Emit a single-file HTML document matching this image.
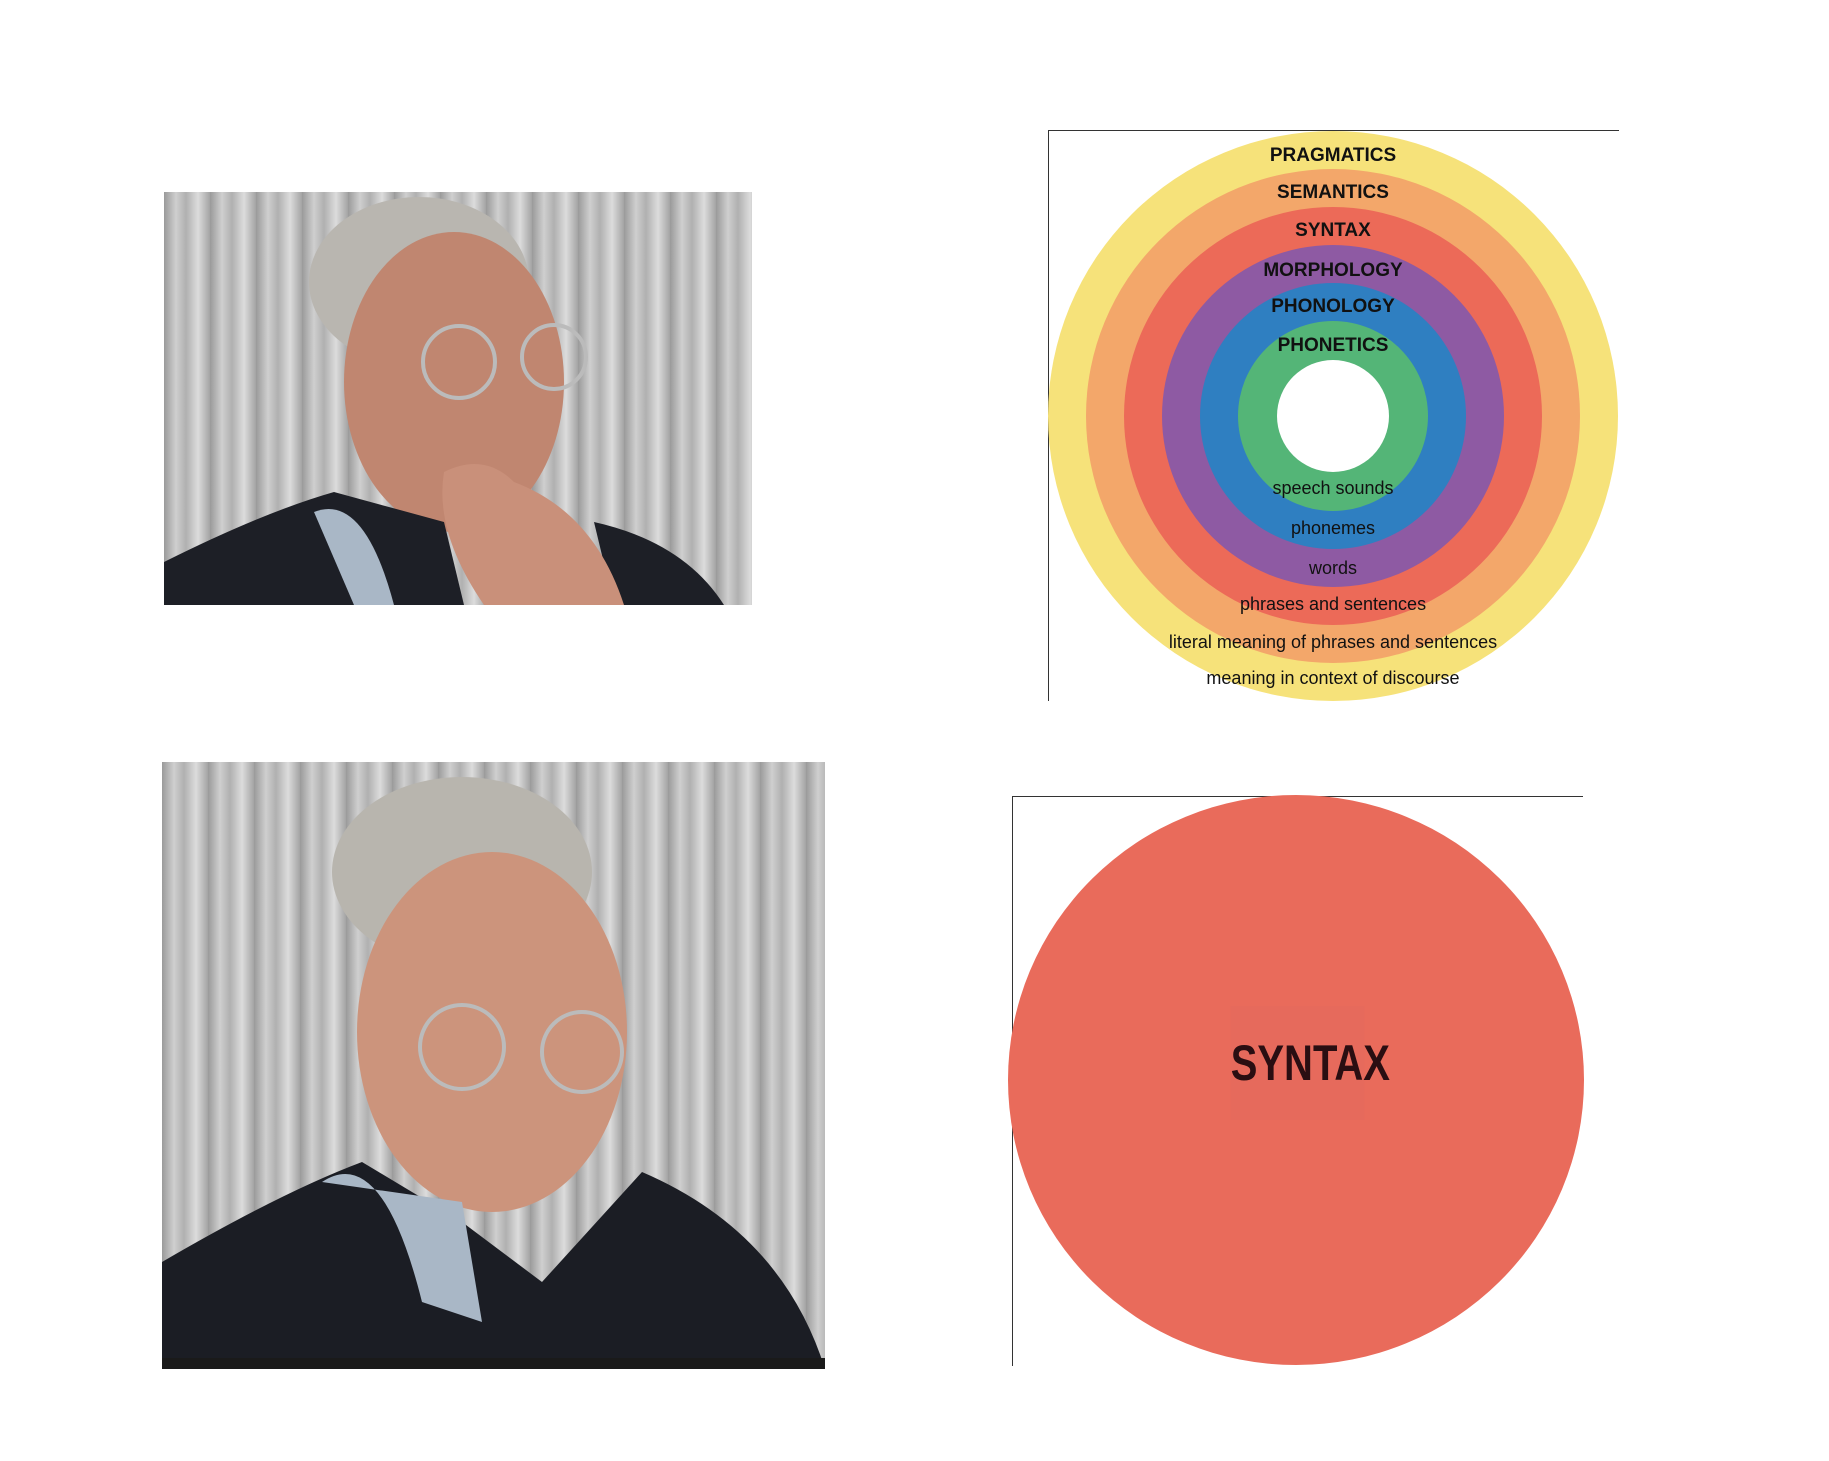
<!DOCTYPE html>
<html><head><meta charset="utf-8"><style>
html,body{margin:0;padding:0;background:#fff;width:1829px;height:1461px;overflow:hidden;position:relative;font-family:"Liberation Sans",sans-serif}
.abs{position:absolute}
.curt{background:repeating-linear-gradient(90deg,#9a9a9a 0,#cfcfcf 12px,#b0b0b0 22px,#dcdcdc 34px,#a4a4a4 46px)}
</style></head><body>
<!-- photo 1 -->
<div class="abs curt" style="left:164px;top:192px;width:588px;height:413px;overflow:hidden">
<svg width="588" height="413" style="position:absolute;left:0;top:0">
<ellipse cx="255" cy="90" rx="110" ry="85" fill="#b9b6b0"/>
<ellipse cx="290" cy="190" rx="110" ry="150" fill="#c08670"/>
<path d="M0 413 L0 370 Q100 320 170 300 L280 330 L300 413 Z" fill="#1d1f26"/>
<path d="M430 330 Q520 350 560 413 L450 413 Z" fill="#1d1f26"/>
<path d="M150 320 Q200 300 230 413 L190 413 Z" fill="#a9b7c6"/>
<path d="M280 280 Q320 260 350 290 Q430 320 460 413 L320 413 Q270 340 280 280Z" fill="#c9907a"/>
<circle cx="295" cy="170" r="36" fill="none" stroke="#bbb" stroke-width="4"/>
<circle cx="390" cy="165" r="32" fill="none" stroke="#bbb" stroke-width="4"/>
</svg></div>
<!-- photo 2 -->
<div class="abs curt" style="left:162px;top:762px;width:663px;height:607px;overflow:hidden">
<svg width="663" height="607" style="position:absolute;left:0;top:0">
<ellipse cx="300" cy="110" rx="130" ry="95" fill="#b8b5ae"/>
<ellipse cx="330" cy="270" rx="135" ry="180" fill="#cc947c"/>
<path d="M0 607 L0 500 Q120 430 200 400 L300 460 L380 520 L480 410 Q620 470 663 607 Z" fill="#1b1d24"/>
<path d="M160 420 Q220 380 260 540 L320 560 L300 440 Z" fill="#a9b7c6"/>
<circle cx="300" cy="285" r="42" fill="none" stroke="#bbb" stroke-width="4"/>
<circle cx="420" cy="290" r="40" fill="none" stroke="#bbb" stroke-width="4"/>
<rect x="0" y="596" width="663" height="11" fill="#1a1a1a"/>
</svg></div>
<!-- diagram -->
<div class="abs" style="left:1048px;top:130px;width:570px;height:570px;border-top:1px solid #333;border-left:1px solid #333"></div>
<svg class="abs" style="left:1048px;top:130px" width="572" height="572">
<g transform="translate(285,286)">
<circle r="285" fill="#f6e27a"/>
<circle r="247" fill="#f3a76a"/>
<circle r="209" fill="#ec6a58"/>
<circle r="171" fill="#8e5aa3"/>
<circle r="133" fill="#2f7fc1"/>
<circle r="95" fill="#54b577"/>
<circle r="56" fill="#fff"/>
<g font-weight="bold" font-size="19" fill="#111" text-anchor="middle">
<text y="-255">PRAGMATICS</text>
<text y="-218">SEMANTICS</text>
<text y="-180">SYNTAX</text>
<text y="-140">MORPHOLOGY</text>
<text y="-104">PHONOLOGY</text>
<text y="-65">PHONETICS</text>
</g>
<g font-size="18" fill="#111" text-anchor="middle">
<text y="78">speech sounds</text>
<text y="118">phonemes</text>
<text y="158">words</text>
<text y="194">phrases and sentences</text>
<text y="232">literal meaning of phrases and sentences</text>
<text y="268">meaning in context of discourse</text>
</g></g></svg>
<!-- syntax circle -->
<div class="abs" style="left:1012px;top:796px;width:570px;height:569px;border-top:1px solid #333;border-left:1px solid #333"></div>
<div class="abs" style="left:1008px;top:795px;width:576px;height:570px;border-radius:50%;background:#e96b5b"></div>
<div class="abs" style="left:1214px;top:1006px;width:167px;height:114px;background:#e66a5c;color:#2a0e12;font-weight:bold;font-size:50px;line-height:114px;text-align:center;transform:scaleX(0.8)">SYNTAX</div>
</body></html>
